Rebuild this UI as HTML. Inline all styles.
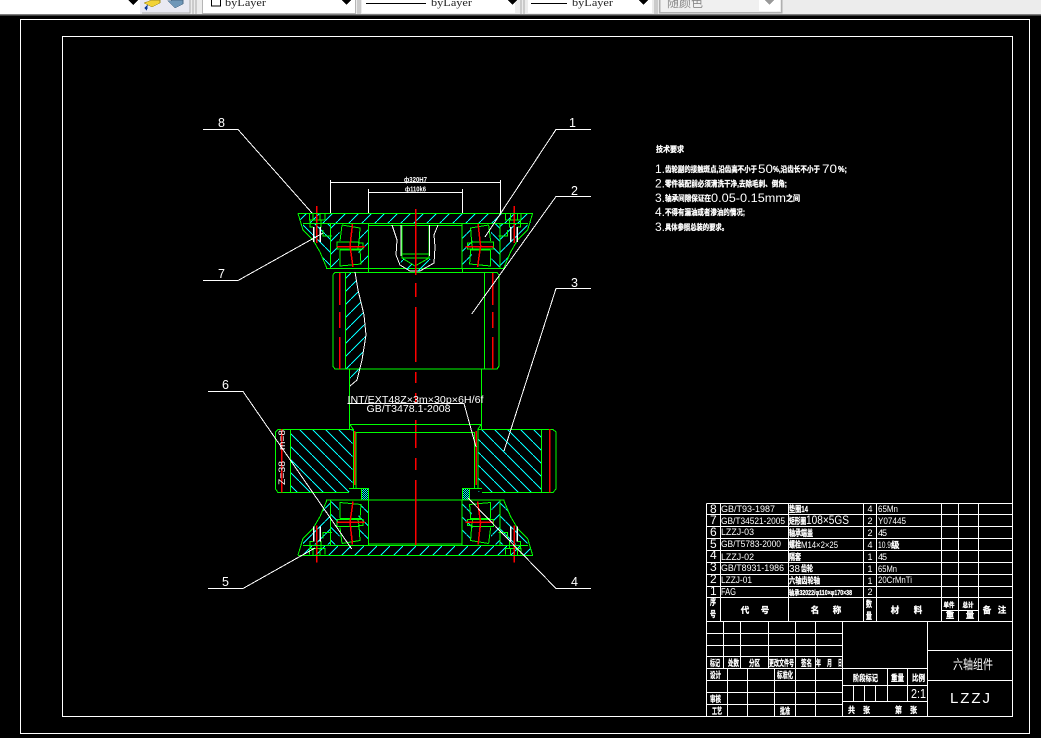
<!DOCTYPE html>
<html><head><meta charset="utf-8"><title>LZZJ</title>
<style>
html,body{margin:0;padding:0;background:#000;width:1041px;height:738px;overflow:hidden}
svg{display:block}
svg path,svg rect{shape-rendering:crispEdges}
text{font-family:"Liberation Sans","Noto Sans CJK SC",sans-serif;fill:#fff}
.c{font-weight:700;font-size:8.5px;stroke:#fff;stroke-width:.3}
.n{stroke:#fff;stroke-width:.3}
.m{text-anchor:middle}
.g{stroke:#0f0;stroke-width:1;fill:none}
.r{stroke:#f00;stroke-width:1.5;fill:none}
.w{stroke:#fff;stroke-width:1;fill:none}
.t{stroke:#fff;stroke-width:1;fill:none}
</style></head><body>
<svg width="1041" height="738" viewBox="0 0 1041 738" xmlns="http://www.w3.org/2000/svg">
<defs>
<pattern id="hf" width="13" height="13" patternUnits="userSpaceOnUse"><path d="M0 13L13 0" stroke="#0ff" stroke-width="1"/></pattern>
<pattern id="hb" width="13" height="13" patternUnits="userSpaceOnUse"><path d="M0 0L13 13" stroke="#0ff" stroke-width="1"/></pattern>
<pattern id="hd" width="2" height="2" patternUnits="userSpaceOnUse"><rect width="1" height="1" fill="#0ff"/><rect x="1" y="1" width="1" height="1" fill="#0ff"/></pattern>
<g id="half">
 <path fill="url(#hb)" d="M303 224L330 224V268H327L320 252L313 240L303 230Z"/>
 <path fill="url(#hf)" d="M330 224H341L338 241V250L340 267H330Z"/>
 <path fill="url(#hf)" d="M360 226H368.5V268H361L358 250L358 243Z"/>
 <path fill="url(#hf)" transform="matrix(-1 0 0 1 830.6 0)" d="M330 224H341L338 241V250L340 267H330Z"/>
 <path fill="url(#hb)" transform="matrix(-1 0 0 1 830.6 0)" d="M360 226H368.5V268H361L358 250L358 243Z"/>
 <path fill="url(#hb)" transform="matrix(-1 0 0 1 830.6 0)" d="M303 224L330 224V268H327L320 252L313 240L303 230Z"/>
 <g id="qtr">
  <path class="g" d="M298 213.500L303 230L313 240L320 252L327 268.5"/>
  <path class="g" d="M330.500 223.500V268.500M368.500 223.500V268.500"/>
  <path class="g" d="M342 225L360 228L359 242L337 242L337 249L358 249L359 243M340 250L360 250L361 264L340 266L340 250M342 225L340 241"/>
  <path class="g" d="M358 243H363V249H358"/>
  <path class="g" d="M309.500 214V220H325V214M313 213.500V220M320 213.500V220M310 220V227H313M321 220V227H320"/>
  <path d="M313.500 227V242M320 227V242" stroke="#fff" stroke-width="1.500" fill="none"/>
  <path class="g" d="M323 230V236H332"/>
  <path class="r" d="M316.500 206V243M352.500 224L350 246L353 267M337 246.500H365"/>
 </g>
 <use href="#qtr" transform="matrix(-1 0 0 1 830.6 0)"/>
 <path class="g" d="M326 268.500H504.500"/>
</g>
</defs>

<!-- toolbar -->
<rect width="1041" height="14" fill="#ececec"/>
<rect y="14" width="1041" height="1.500" fill="#7d7d7d"/>
<rect width="140" height="14" fill="#fff"/>
<path d="M128 0H138L133 5Z" fill="#000"/>
<rect x="140" width="50" height="13" fill="#e9e9f2"/>
<path d="M190 0V13H142" stroke="#aaa" fill="none"/>
<path d="M144 3L152 0H160V3L152 7Z" fill="#f2d337" stroke="#a08a20" stroke-width=".6"/>
<path d="M146 6L150 2L149 9Z" fill="#0a3a9a" transform="translate(-2 2)"/>
<path d="M168 1L175 0H183V4L175 8Z" fill="#6f97b8" stroke="#4b6a86" stroke-width=".6"/>
<path d="M193 0V14M196 0V14" stroke="#aaa"/>
<rect x="203" width="152" height="13" fill="#fff"/>
<path d="M202.500 0V13.500H355.500V0" stroke="#b5b5b5" fill="none"/>
<rect x="211.500" y="-3" width="9" height="9" fill="#fff" stroke="#000"/>
<text x="225" y="6" font-size="11" style="font-family:'Liberation Serif',serif;fill:#222" textLength="41" lengthAdjust="spacingAndGlyphs">byLayer</text>
<path d="M342 0H351L346.500 5Z" fill="#000"/>
<path d="M358 0V14M360 0V14" stroke="#aaa"/>
<rect x="362" width="153" height="13" fill="#fff"/>
<path d="M366 3.500H426" stroke="#000"/>
<text x="431" y="6" font-size="11" style="font-family:'Liberation Serif',serif;fill:#222" textLength="41" lengthAdjust="spacingAndGlyphs">byLayer</text>
<path d="M508 0H517L512.500 5Z" fill="#000"/>
<path d="M521 0V14M524 0V14" stroke="#aaa"/>
<rect x="528" width="124" height="13" fill="#fff"/>
<path d="M531 3.500H567" stroke="#000"/>
<text x="572" y="6" font-size="11" style="font-family:'Liberation Serif',serif;fill:#222" textLength="41" lengthAdjust="spacingAndGlyphs">byLayer</text>
<path d="M639 0H648L643.500 5Z" fill="#000"/>
<path d="M655 0V14M657 0V14" stroke="#aaa"/>
<rect x="659" width="118" height="12" fill="#f0f0f0"/>
<path d="M659.500 0V12.500H781.500V0" stroke="#b0b0b0" stroke-width="1.500" fill="none"/>
<rect x="759" width="21" height="11" fill="#fff"/>
<path d="M765 0H774L769.500 5Z" fill="#999"/>
<text x="667" y="7" font-size="12" style="fill:#8a8a8a">随颜色</text>

<!-- frames -->
<rect y="15.500" width="1041" height="722.500" fill="#000"/>
<rect x="20.500" y="19.500" width="1009" height="714" class="t"/>
<rect x="62.500" y="36.500" width="950" height="680" class="t"/>

<!-- top plate & bottom plate -->
<rect x="300" y="214" width="231" height="9" fill="url(#hf)"/>
<rect x="300" y="546" width="231" height="9" fill="url(#hf)"/>
<use href="#half"/>
<use href="#half" transform="matrix(1 0 0 -1 0 768.5)"/>
<path class="g" d="M298 213.500H533M303 223.500H528M298 555.500H533M303 545.500H528"/>
<path class="g" d="M368.500 225.500H462.500M368.500 268.500V272M462.500 268.500V272M368.500 544H462.500"/>

<!-- centre pocket -->
<path class="g" d="M402 225V254H429V225M402 258H429V254M402 254V258L415 266L429 258"/>
<path class="w" d="M392 225L397 240L396 255L400 265L410 271H420L434 263L435 247L434 235L438 225M401 225V256M429.500 225V256"/>
<path fill="url(#hf)" d="M402 258L415 266L429 258L434 263L420 271H410L400 265Z"/>

<!-- sleeve -->
<path fill="url(#hf)" d="M345.500 272.500H355L358 290L364 315L366 335L362 360L357 380L350 386V369H345.500Z"/>
<path class="g" d="M335 272.500H497L499 275V366L497 369H335L332.800 366V275Z"/>
<path class="g" d="M345.500 272.500V369M484.500 272.500V369"/>
<path class="g" d="M349.500 369V430M481.500 369V430"/>
<path class="w" d="M355 272L358 290L364 315L366 335L362 360L357 380L350 386"/>
<path class="r" d="M339.500 273V305M339.500 312V328M339.500 337V369M492.500 273V305M492.500 312V328M492.500 337V369"/>
<path class="r" d="M415.500 209V275M415.500 283V297M415.500 307V362M415.500 372V383M415.500 393V403M415.500 420V448M415.500 458V470M415.500 480V545"/>

<!-- gear -->
<rect x="290.500" y="430" width="62" height="62" fill="url(#hb)"/>
<rect x="478.500" y="430" width="63" height="62" fill="url(#hb)"/>
<path class="g" d="M350 424.500H481.500M349.500 424L353 429M481.500 424L478 429"/>
<path class="g" d="M353 429.500H278L275.500 432V489L278 492.500H349M478 429.500H553L556 432V489L553 492.500H482"/>
<path class="g" d="M290.500 429V492.500M541.500 429V492.500"/>
<path class="g" d="M353.500 429V488M356 432V488M474.500 432V488M478 429V488M356 432.500H474.500"/>
<path class="r" d="M281.500 429V492.500M549.500 429V492.500"/>
<path d="M354.800 431V485M476.300 431V485" stroke="#f00" stroke-width="1.600"/>

<!-- spacer -->
<rect x="361.500" y="488.500" width="7" height="11" fill="url(#hd)"/>
<rect x="462.500" y="488.500" width="7" height="11" fill="url(#hd)"/>
<path class="g" d="M349 488.500H368.500V500.500M361.500 488.500V500.500M482 488.500H462.500V500.500M469.500 488.500V500.500"/>

<!-- dimensions -->
<path class="w" d="M330.500 180V213M500.500 180V213M368.500 189V213M462.500 189V213M330.500 182.500H500.500M368.500 192.500H462.500"/>
<text x="404" y="182" font-size="7" textLength="23" lengthAdjust="spacingAndGlyphs" font-weight="700">ф320H7</text>
<text x="405" y="191.500" font-size="7" textLength="21" lengthAdjust="spacingAndGlyphs" font-weight="700">ф110k6</text>
<text x="347.500" y="403" font-size="10.500" textLength="136" lengthAdjust="spacingAndGlyphs">INT/EXT48Z×3m×30p×6H/6f</text>
<text x="366.500" y="412" font-size="10.500" textLength="84" lengthAdjust="spacingAndGlyphs">GB/T3478.1-2008</text>
<text transform="translate(285 450) rotate(-90)" font-size="9" textLength="20" lengthAdjust="spacingAndGlyphs">m=8</text>
<text transform="translate(285 485) rotate(-90)" font-size="9" textLength="24" lengthAdjust="spacingAndGlyphs">Z=38</text>

<!-- leaders -->
<path class="w" d="M203 129.500H238L312 213M591 129.500H556L485 237M591 196.500H556L471.700 314M591 288.500H556L504 451"/>
<path class="w" d="M208 391.500H243L351.700 549M208 588.500H243L315 548M591 588.500H556L468 498M203 280.500H238L323 233M347.500 403.500H464L476 447"/>
<g font-size="12.500">
<text x="218" y="127">8</text><text x="569" y="127">1</text><text x="571" y="195">2</text>
<text x="218" y="278">7</text><text x="571" y="287">3</text><text x="222" y="389">6</text>
<text x="222" y="586">5</text><text x="571" y="586">4</text>
</g>

<!-- technical notes -->
<g font-weight="700">
<text class="n" x="656" y="152" font-size="8" textLength="28" lengthAdjust="spacingAndGlyphs">技术要求</text>
<text x="655" y="173" font-size="12" font-weight="400">1.</text>
<text class="n" x="665" y="172" font-size="8" textLength="92" lengthAdjust="spacingAndGlyphs">齿轮副的接触斑点,沿齿高不小于</text>
<text x="758" y="173" font-size="12" font-weight="400" textLength="15" lengthAdjust="spacingAndGlyphs">50</text>
<text class="n" x="773" y="172" font-size="8" textLength="47" lengthAdjust="spacingAndGlyphs">%,沿齿长不小于</text>
<text x="822" y="173" font-size="12" font-weight="400" textLength="15" lengthAdjust="spacingAndGlyphs">70</text>
<text class="n" x="838" y="172" font-size="8" textLength="9" lengthAdjust="spacingAndGlyphs">%;</text>
<text x="655" y="187.500" font-size="12" font-weight="400">2.</text>
<text class="n" x="665" y="186.500" font-size="8" textLength="122" lengthAdjust="spacingAndGlyphs">零件装配前必须清洗干净,去除毛刺、倒角;</text>
<text x="655" y="202" font-size="12" font-weight="400">3.</text>
<text class="n" x="665" y="201" font-size="8" textLength="46" lengthAdjust="spacingAndGlyphs">轴承间隙保证在</text>
<text x="711" y="202" font-size="11.500" font-weight="400" textLength="75" lengthAdjust="spacingAndGlyphs">0.05-0.15mm</text>
<text class="n" x="786" y="201" font-size="8" textLength="14" lengthAdjust="spacingAndGlyphs">之间</text>
<text x="655" y="216" font-size="12" font-weight="400">4.</text>
<text class="n" x="665" y="215" font-size="8" textLength="80" lengthAdjust="spacingAndGlyphs">不得有漏油或者渗油的情况;</text>
<text x="655" y="231" font-size="12" font-weight="400">3.</text>
<text class="n" x="665" y="230" font-size="8" textLength="63" lengthAdjust="spacingAndGlyphs">具体参照总装的要求。</text>
</g>

<!-- BOM table -->
<path class="t" d="M706.500 503.500H1012.500M706.500 514.500H1012.500M706.500 526.500H1012.500M706.500 538.500H1012.500M706.500 550.500H1012.500M706.500 562.500H1012.500M706.500 574.500H1012.500M706.500 586.500H1012.500M706.500 597.500H1012.500M706.500 621.500H1012.500M941.500 610.500H978.500"/>
<path class="t" d="M706.500 503.500V716.500M720.500 503.500V621.500M788.500 503.500V621.500M863.500 503.500V621.500M876.500 503.500V621.500M941.500 503.500V621.500M958.500 503.500V621.500M978.500 503.500V621.500"/>
<g font-size="12">
<text x="710" y="513">8</text><text x="710" y="524">7</text><text x="710" y="536">6</text><text x="710" y="548">5</text><text x="710" y="559">4</text><text x="710" y="571">3</text><text x="710" y="583">2</text><text x="710" y="595">1</text>
</g>
<g font-size="9">
<text x="721" y="512" textLength="54" lengthAdjust="spacingAndGlyphs">GB/T93-1987</text>
<text x="721" y="524" textLength="64" lengthAdjust="spacingAndGlyphs">GB/T34521-2005</text>
<text x="721" y="535" textLength="33" lengthAdjust="spacingAndGlyphs">LZZJ-03</text>
<text x="721" y="547" textLength="60" lengthAdjust="spacingAndGlyphs">GB/T5783-2000</text>
<text x="721" y="560" textLength="33" lengthAdjust="spacingAndGlyphs">LZZJ-02</text>
<text x="721" y="571" textLength="63" lengthAdjust="spacingAndGlyphs">GB/T8931-1986</text>
<text x="721" y="583" textLength="31" lengthAdjust="spacingAndGlyphs">LZZJ-01</text>
<text x="721" y="595" font-size="10" textLength="15" lengthAdjust="spacingAndGlyphs">FAG</text>
</g>
<g class="c">
<text x="789" y="512" textLength="19" lengthAdjust="spacingAndGlyphs">垫圈14</text>
<text x="789" y="524" textLength="17" lengthAdjust="spacingAndGlyphs">矩形圈</text>
<text x="789" y="536" textLength="24" lengthAdjust="spacingAndGlyphs">轴承端盖</text>
<text x="789" y="547.500" textLength="12" lengthAdjust="spacingAndGlyphs">螺栓</text>
<text x="789" y="560" textLength="12" lengthAdjust="spacingAndGlyphs">隔套</text>
<text x="801" y="571.500" textLength="12" lengthAdjust="spacingAndGlyphs">齿轮</text>
<text x="789" y="583.500" textLength="31" lengthAdjust="spacingAndGlyphs">六轴齿轮轴</text>
<text x="789" y="595" font-size="7" textLength="63" lengthAdjust="spacingAndGlyphs">轴承32022/φ110×φ170×38</text>
</g>
<text x="806" y="524" font-size="12" textLength="43" lengthAdjust="spacingAndGlyphs">108×5GS</text>
<text x="801" y="548" font-size="9" textLength="37" lengthAdjust="spacingAndGlyphs">M14×2×25</text>
<text x="789" y="572" font-size="10" textLength="11" lengthAdjust="spacingAndGlyphs">38</text>
<g font-size="9" class="m">
<text x="870" y="512">4</text><text x="870" y="524">2</text><text x="870" y="536">2</text><text x="870" y="548">4</text><text x="870" y="560">1</text><text x="870" y="572">1</text><text x="870" y="584">1</text><text x="870" y="595">2</text>
</g>
<g font-size="9">
<text x="878" y="512" textLength="20" lengthAdjust="spacingAndGlyphs">65Mn</text>
<text x="878" y="524" textLength="28" lengthAdjust="spacingAndGlyphs">Y07445</text>
<text x="878" y="536" textLength="9">45</text>
<text x="878" y="548" textLength="13" lengthAdjust="spacingAndGlyphs">10.9</text>
<text x="878" y="560" textLength="9">45</text>
<text x="878" y="572" textLength="19" lengthAdjust="spacingAndGlyphs">65Mn</text>
<text x="878" y="583" textLength="34" lengthAdjust="spacingAndGlyphs">20CrMnTi</text>
</g>
<text x="891" y="548" class="c" font-size="7">级</text>
<g class="c m">
<text x="713" y="605" textLength="6" lengthAdjust="spacingAndGlyphs">序</text><text x="713" y="617" textLength="6" lengthAdjust="spacingAndGlyphs">号</text>
<text x="745" y="613">代</text><text x="765" y="613">号</text>
<text x="815" y="613">名</text><text x="837" y="613">称</text>
<text x="869" y="607" textLength="6" lengthAdjust="spacingAndGlyphs">数</text><text x="869" y="619" textLength="6" lengthAdjust="spacingAndGlyphs">量</text>
<text x="895" y="613">材</text><text x="918" y="613">料</text>
<text x="949" y="607" style="font-size:6.500px" textLength="11" lengthAdjust="spacingAndGlyphs">单件</text>
<text x="968" y="607" style="font-size:6.500px" textLength="11" lengthAdjust="spacingAndGlyphs">总计</text>
<text x="950" y="618">重</text><text x="970" y="618">量</text>
<text x="987" y="613">备</text><text x="1002" y="613">注</text>
</g>

<!-- title block -->
<path class="t" d="M706.500 633.500H842.500M706.500 645.500H842.500M706.500 656.500H842.500M706.500 668.500H927.500M706.500 680.500H842.500M706.500 692.500H842.500M706.500 704.500H842.500M706.500 716.500H1012.500M842.500 685.500H927.500M842.500 701.500H927.500M927.500 650.500H1012.500M927.500 680.500H1012.500"/>
<path class="t" d="M723.500 621.500V668.500M740.500 621.500V668.500M768.500 621.500V668.500M795.500 621.500V716.500M815.500 621.500V716.500M842.500 621.500V716.500M727.500 668.500V716.500M747.500 668.500V716.500M774.500 668.500V716.500M887.500 668.500V701.500M907.500 668.500V701.500M853.500 685.500V701.500M864.500 685.500V701.500M875.500 685.500V701.500M927.500 621.500V716.500M1012.500 503.500V716.500"/>
<g class="c">
<text x="710" y="666" textLength="10" lengthAdjust="spacingAndGlyphs">标记</text>
<text x="728" y="666" textLength="11" lengthAdjust="spacingAndGlyphs">处数</text>
<text x="749" y="666" textLength="11" lengthAdjust="spacingAndGlyphs">分区</text>
<text x="769" y="666" textLength="25" lengthAdjust="spacingAndGlyphs">更改文件号</text>
<text x="801" y="666" textLength="11" lengthAdjust="spacingAndGlyphs">签名</text>
<text x="816" y="666" textLength="5" lengthAdjust="spacingAndGlyphs">年</text><text x="827" y="666" textLength="5" lengthAdjust="spacingAndGlyphs">月</text><text x="838" y="666" textLength="4" lengthAdjust="spacingAndGlyphs">日</text>
<text x="710" y="678" textLength="11" lengthAdjust="spacingAndGlyphs">设计</text>
<text x="777" y="678" textLength="16" lengthAdjust="spacingAndGlyphs">标准化</text>
<text x="710" y="702" textLength="11" lengthAdjust="spacingAndGlyphs">审核</text>
<text x="712" y="714" textLength="10" lengthAdjust="spacingAndGlyphs">工艺</text>
<text x="780" y="714" textLength="10" lengthAdjust="spacingAndGlyphs">批准</text>
<text x="853" y="681" textLength="25" lengthAdjust="spacingAndGlyphs">阶段标记</text>
<text x="891" y="681" textLength="13" lengthAdjust="spacingAndGlyphs">重量</text>
<text x="912" y="681" textLength="13" lengthAdjust="spacingAndGlyphs">比例</text>
<text x="848" y="713" textLength="7" lengthAdjust="spacingAndGlyphs">共</text><text x="863" y="713" textLength="7" lengthAdjust="spacingAndGlyphs">张</text>
<text x="895" y="713" textLength="7" lengthAdjust="spacingAndGlyphs">第</text><text x="910" y="713" textLength="7" lengthAdjust="spacingAndGlyphs">张</text>
</g>
<text x="911" y="698" font-size="13" textLength="15" lengthAdjust="spacingAndGlyphs">2:1</text>
<text x="953" y="669" font-size="13" font-weight="400" textLength="40" lengthAdjust="spacingAndGlyphs">六轴组件</text>
<text x="950" y="703" font-size="15" textLength="40">LZZJ</text>
</svg>
</body></html>
